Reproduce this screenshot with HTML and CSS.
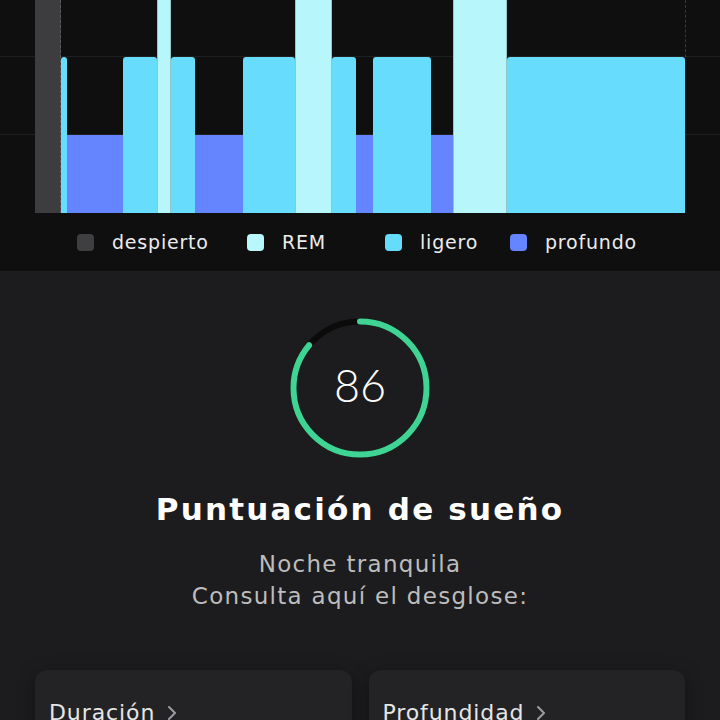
FILE: index.html
```html
<!DOCTYPE html>
<html lang="es">
<head>
    <meta charset="UTF-8">
    <meta name="viewport" content="width=device-width, initial-scale=1.0">
    <title>Sueño</title>
    <link rel="stylesheet" href="styles.css">
</head>
<body>
    <div class="chart">
        <div class="plot">
            <div class="seg awake" style="width:26px"></div>
            <div class="seg light" style="width:6px"></div>
            <div class="seg deep" style="width:56px"></div>
            <div class="seg light" style="width:34px"></div>
            <div class="seg rem" style="width:14px"></div>
            <div class="seg light" style="width:24px"></div>
            <div class="seg deep" style="width:48px"></div>
            <div class="seg light" style="width:52px"></div>
            <div class="seg rem" style="width:37px"></div>
            <div class="seg light" style="width:24px"></div>
            <div class="seg deep" style="width:17px"></div>
            <div class="seg light" style="width:58px"></div>
            <div class="seg deep" style="width:22px"></div>
            <div class="seg rem" style="width:54px"></div>
            <div class="seg light" style="width:178px"></div>
        </div>

        <div class="legend">
            <div class="legend-item item-awake"><span class="swatch awake"></span>despierto</div>
            <div class="legend-item item-rem"><span class="swatch rem"></span>REM</div>
            <div class="legend-item item-light"><span class="swatch light"></span>ligero</div>
            <div class="legend-item"><span class="swatch deep"></span>profundo</div>
        </div>
    </div>

    <section class="score">
        <div class="ring">
            <svg width="140" height="140" viewBox="0 0 140 140">
                <circle cx="70" cy="70" r="66.5" fill="none" stroke="#0b0b0b" stroke-width="6"/>
                <circle cx="70" cy="70" r="66.5" fill="none" stroke="#3fd493" stroke-width="6"
                        stroke-linecap="round" stroke-dasharray="359.3 500"
                        transform="rotate(-90 70 70)"/>
            </svg>
            <span class="value">86</span>
        </div>

        <h1>Puntuación de sueño</h1>
        <p class="summary">Noche tranquila<br>Consulta aquí el desglose:</p>

        <div class="cards">
            <div class="card">
                <span class="card-title">Duración</span>
                <svg class="chev" width="10" height="16" viewBox="0 0 10 16">
                    <polyline points="2,2 8,8 2,14" fill="none" stroke="#9c9c9c" stroke-width="2" stroke-linecap="round" stroke-linejoin="round"/>
                </svg>
            </div>
            <div class="card">
                <span class="card-title">Profundidad</span>
                <svg class="chev" width="10" height="16" viewBox="0 0 10 16">
                    <polyline points="2,2 8,8 2,14" fill="none" stroke="#9c9c9c" stroke-width="2" stroke-linecap="round" stroke-linejoin="round"/>
                </svg>
            </div>
        </div>
    </section>
</body>
</html>
```

FILE: styles.css
```css
body {
    margin: 0;
    padding: 0;
    height: 720px;
    overflow: hidden;
    background-color: #1c1c1e;
    font-family: "DejaVu Sans", "Open Sans", sans-serif;
    color: #f2f2f2;
}
.chart {
    background-color: #0f0f0f;
    height: 271px;
}
.plot {
    display: flex;
    align-items: flex-end;
    height: 213px;
    padding-left: 35px;
    position: relative;
    background-image: linear-gradient(to bottom,
        transparent 56px, #1f1f1f 56px, #1f1f1f 57px, transparent 57px,
        transparent 134px, #1f1f1f 134px, #1f1f1f 135px, transparent 135px);
}
.plot::after {
    content: "";
    position: absolute;
    left: 685px;
    top: 0;
    height: 57px;
    border-left: 1px dashed #3a3a3a;
}
.seg {
    box-sizing: border-box;
}
.seg.awake {
    height: 213px;
    background-color: #3d3d3f;
    border-right: 1px dashed #5a5a5a;
}
.seg.rem {
    height: 213px;
    background-color: #b7f7fb;
    box-shadow: inset 1px 0 0 rgba(0, 0, 0, 0.2), inset -1px 0 0 rgba(0, 0, 0, 0.2);
}
.seg.light {
    height: 156px;
    background-color: #67dcfd;
    border-radius: 3px 3px 0 0;
}
.seg.deep {
    height: 78px;
    background-color: #6584ff;
}
.legend {
    display: flex;
    align-items: center;
    height: 58px;
    padding-left: 77px;
    font-size: 19px;
    letter-spacing: 0.8px;
    color: #ececec;
}
.legend-item {
    display: flex;
    align-items: center;
}
.item-awake {
    width: 170px;
}
.item-rem {
    width: 138px;
}
.item-light {
    width: 125px;
}
.swatch {
    width: 17px;
    height: 17px;
    border-radius: 4px;
    margin-right: 18px;
}
.swatch.awake {
    background-color: #3f3f41;
}
.swatch.rem {
    background-color: #b8f8fc;
}
.swatch.light {
    background-color: #66dcfd;
}
.swatch.deep {
    background-color: #6584ff;
}
.score {
    display: flex;
    flex-direction: column;
    align-items: center;
    padding-top: 47px;
}
.ring {
    display: grid;
    place-items: center;
    width: 140px;
    height: 140px;
}
.ring svg,
.ring .value {
    grid-area: 1 / 1;
}
.value {
    margin-bottom: 6px;
    font-family: Lato, sans-serif;
    font-size: 45px;
    font-weight: 300;
    color: #ffffff;
}
h1 {
    margin: 31px 0 0 0;
    font-size: 31px;
    line-height: 40px;
    font-weight: bold;
    letter-spacing: 2.2px;
    color: #ffffff;
}
.summary {
    margin: 19px 0 0 0;
    text-align: center;
    font-size: 23px;
    line-height: 32px;
    letter-spacing: 1.3px;
    color: #bdbdbd;
}
.cards {
    display: flex;
    gap: 17px;
    width: 650px;
    margin-top: 58px;
}
.card {
    flex: 1;
    display: flex;
    align-items: flex-start;
    height: 120px;
    box-sizing: border-box;
    padding: 29px 14px;
    border-radius: 12px;
    background-color: #232325;
    box-shadow: 0 4px 18px rgba(0, 0, 0, 0.35);
    font-size: 22px;
    line-height: 28px;
    letter-spacing: 0.9px;
    color: #e6e6e6;
}
.chev {
    margin: 6px 0 0 12px;
}
```
